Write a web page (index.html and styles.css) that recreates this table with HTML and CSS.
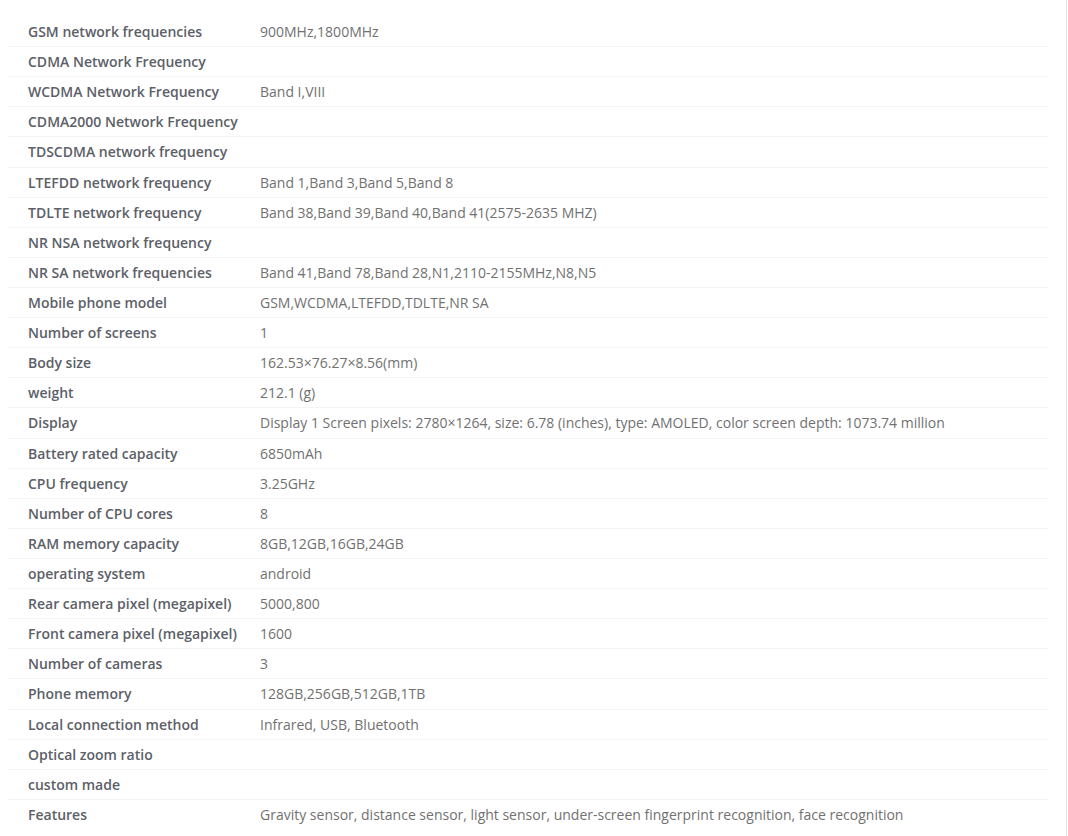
FILE: index.html
```html
<!DOCTYPE html>
<html lang="en">
<head>
  <meta charset="UTF-8">
  <title>Specifications</title>
  <link rel="stylesheet" href="styles.css">
</head>
<body>

<div class="page">
  <table class="specs">
    <colgroup><col class="col-label"><col></colgroup>
    <tr><td class="label">GSM network frequencies</td><td class="value">900MHz,1800MHz</td></tr>
    <tr><td class="label">CDMA Network Frequency</td><td class="value"></td></tr>
    <tr><td class="label">WCDMA Network Frequency</td><td class="value">Band I,VIII</td></tr>
    <tr><td class="label">CDMA2000 Network Frequency</td><td class="value"></td></tr>
    <tr><td class="label">TDSCDMA network frequency</td><td class="value"></td></tr>
    <tr><td class="label">LTEFDD network frequency</td><td class="value">Band 1,Band 3,Band 5,Band 8</td></tr>
    <tr><td class="label">TDLTE network frequency</td><td class="value">Band 38,Band 39,Band 40,Band 41(2575-2635 MHZ)</td></tr>
    <tr><td class="label">NR NSA network frequency</td><td class="value"></td></tr>
    <tr><td class="label">NR SA network frequencies</td><td class="value">Band 41,Band 78,Band 28,N1,2110-2155MHz,N8,N5</td></tr>
    <tr><td class="label">Mobile phone model</td><td class="value">GSM,WCDMA,LTEFDD,TDLTE,NR SA</td></tr>
    <tr><td class="label">Number of screens</td><td class="value">1</td></tr>
    <tr><td class="label">Body size</td><td class="value">162.53×76.27×8.56(mm)</td></tr>
    <tr><td class="label">weight</td><td class="value">212.1 (g)</td></tr>
    <tr><td class="label">Display</td><td class="value">Display 1 Screen pixels: 2780×1264, size: 6.78 (inches), type: AMOLED, color screen depth: 1073.74 million</td></tr>
    <tr><td class="label">Battery rated capacity</td><td class="value">6850mAh</td></tr>
    <tr><td class="label">CPU frequency</td><td class="value">3.25GHz</td></tr>
    <tr><td class="label">Number of CPU cores</td><td class="value">8</td></tr>
    <tr><td class="label">RAM memory capacity</td><td class="value">8GB,12GB,16GB,24GB</td></tr>
    <tr><td class="label">operating system</td><td class="value">android</td></tr>
    <tr><td class="label">Rear camera pixel (megapixel)</td><td class="value">5000,800</td></tr>
    <tr><td class="label">Front camera pixel (megapixel)</td><td class="value">1600</td></tr>
    <tr><td class="label">Number of cameras</td><td class="value">3</td></tr>
    <tr><td class="label">Phone memory</td><td class="value">128GB,256GB,512GB,1TB</td></tr>
    <tr><td class="label">Local connection method</td><td class="value">Infrared, USB, Bluetooth</td></tr>
    <tr><td class="label">Optical zoom ratio</td><td class="value"></td></tr>
    <tr><td class="label">custom made</td><td class="value"></td></tr>
    <tr><td class="label">Features</td><td class="value">Gravity sensor, distance sensor, light sensor, under-screen fingerprint recognition, face recognition</td></tr>
  </table>
</div>

</body>
</html>
```

FILE: styles.css
```css
body {
  margin: 0;
  background: #ffffff;
  font-family: "Open Sans", "Noto Sans", Arial, sans-serif;
  font-size: 14px;
}
.page {
  width: 1067px;
  height: 836px;
  box-sizing: border-box;
  border-right: 1px solid #e2e2e2;
  padding: 17px 0 0 8px;
}
.specs {
  width: 1040px;
  border-collapse: collapse;
  table-layout: fixed;
}
.col-label {
  width: 252px;
}
.specs td {
  height: 29.12px;
  padding: 0;
  border-bottom: 1px solid #f3f3f3;
  vertical-align: middle;
  white-space: nowrap;
}
.specs tr:last-child td {
  border-bottom: none;
}
.specs td.label {
  padding-left: 20px;
  font-weight: 600;
  color: #5c6068;
}
.value {
  color: #717171;
}
```
